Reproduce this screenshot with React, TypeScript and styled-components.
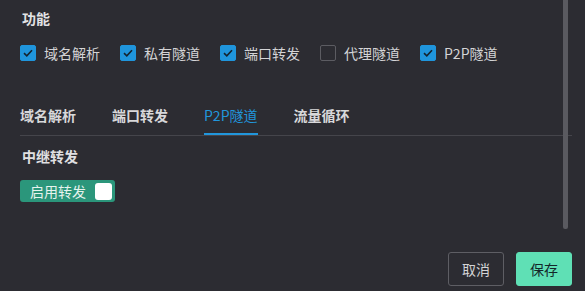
import * as React from "react";
import styled, { createGlobalStyle } from "styled-components";

const GlobalStyle = createGlobalStyle`
  html, body {
    margin: 0;
    padding: 0;
    background: #2c2c32;
  }
  body {
    font-family: "Noto Sans CJK SC", "Noto Sans", sans-serif;
    color: #d4d4d6;
  }
`;

const Page = styled.div`
  position: relative;
  height: 291px;
  display: flex;
  flex-direction: column;
  box-sizing: border-box;
  padding: 8px 13px 5px 20px;
  overflow: hidden;
`;

const ScrollThumb = styled.div`
  position: absolute;
  left: 563px;
  top: 0;
  width: 5px;
  height: 229px;
  background: #5a5a60;
  border-radius: 0 0 2px 2px;
`;

const Title = styled.div`
  font-size: 14px;
  line-height: 20px;
  font-weight: 700;
  color: #e2e2e4;
  padding-left: 2px;
`;

const CheckRow = styled.div`
  display: flex;
  gap: 20px;
  margin-top: 17px;
  height: 16px;
  align-items: center;
`;

const CheckItem = styled.label`
  display: flex;
  align-items: center;
  gap: 8px;
  font-size: 14px;
  line-height: 16px;
  color: #d4d4d6;
`;

const Box = styled.span<{ $checked: boolean }>`
  width: 16px;
  height: 16px;
  box-sizing: border-box;
  border-radius: 2px;
  display: flex;
  align-items: center;
  justify-content: center;
  background: ${(p) => (p.$checked ? "#1f95dc" : "transparent")};
  border: 1px solid ${(p) => (p.$checked ? "#1f95dc" : "#5c5c62")};
`;

const TabBar = styled.div`
  display: flex;
  gap: 36px;
  margin-top: 40px;
  border-bottom: 1px solid #45454b;
`;

const Tab = styled.div<{ $active: boolean }>`
  font-size: 14px;
  line-height: 28px;
  padding-bottom: 4px;
  font-weight: ${(p) => (p.$active ? 400 : 700)};
  color: ${(p) => (p.$active ? "#2196dc" : "#d8d8da")};
  border-bottom: 2px solid ${(p) => (p.$active ? "#2196dc" : "transparent")};
`;

const SectionTitle = styled.div`
  margin-top: 10px;
  padding-left: 2px;
  font-size: 14px;
  line-height: 20px;
  font-weight: 700;
  color: #e0e0e2;
`;

const Toggle = styled.div`
  margin-top: 14px;
  width: 95px;
  height: 22px;
  box-sizing: border-box;
  border-radius: 3px;
  background: #2b967b;
  display: flex;
  align-items: center;
  justify-content: space-between;
  padding: 0 3px 0 10px;
  font-size: 14px;
  color: #e6f3ee;
`;

const Knob = styled.span`
  width: 17px;
  height: 17px;
  border-radius: 3px;
  background: #ffffff;
`;

const Footer = styled.div`
  margin-top: auto;
  display: flex;
  justify-content: flex-end;
  gap: 12px;
`;

const Button = styled.button<{ $primary?: boolean }>`
  width: 56px;
  height: 34px;
  box-sizing: border-box;
  border-radius: 3px;
  font-family: inherit;
  font-size: 14px;
  cursor: pointer;
  border: 1px solid ${(p) => (p.$primary ? "#5fe0b5" : "#5e5e64")};
  background: ${(p) => (p.$primary ? "#5fe0b5" : "transparent")};
  color: ${(p) => (p.$primary ? "#14262a" : "#d4d4d6")};
`;

const Check = () => (
  <svg width="10" height="8" viewBox="0 0 10 8">
    <path d="M1 4.2 L3.8 6.8 L9 1.2" fill="none" stroke="#14232e" strokeWidth="1.6" />
  </svg>
);

const features = [
  { label: "域名解析", checked: true },
  { label: "私有隧道", checked: true },
  { label: "端口转发", checked: true },
  { label: "代理隧道", checked: false },
  { label: "P2P隧道", checked: true },
];

const tabs = ["域名解析", "端口转发", "P2P隧道", "流量循环"];

const App = () => {
  return (
    <React.Fragment>
      <GlobalStyle />
      <Page>
        <Title>功能</Title>
        <CheckRow>
          {features.map((f) => (
            <CheckItem key={f.label}>
              <Box $checked={f.checked}>{f.checked && <Check />}</Box>
              {f.label}
            </CheckItem>
          ))}
        </CheckRow>
        <TabBar>
          {tabs.map((t) => (
            <Tab key={t} $active={t === "P2P隧道"}>
              {t}
            </Tab>
          ))}
        </TabBar>
        <SectionTitle>中继转发</SectionTitle>
        <div>
          <Toggle>
            启用转发
            <Knob />
          </Toggle>
        </div>
        <Footer>
          <Button>取消</Button>
          <Button $primary>保存</Button>
        </Footer>
        <ScrollThumb />
      </Page>
    </React.Fragment>
  );
};

export default App;
